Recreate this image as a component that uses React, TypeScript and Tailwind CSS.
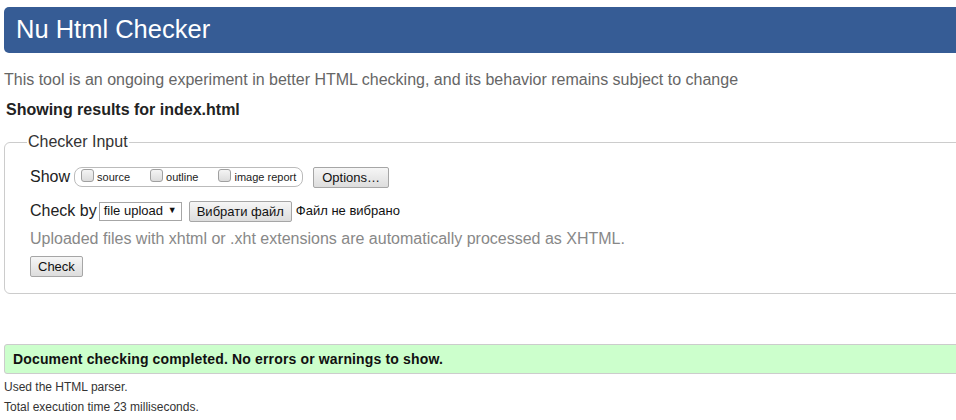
import React from 'react';

const Box: React.FC = () => (
  <span className="inline-block w-[13px] h-[13px] rounded-[3px] border border-[#a0a0a0] bg-gradient-to-b from-[#f4f4f4] to-[#dcdcdc] align-middle mr-[3px] relative top-[-2px]" />
);

export default function App() {
  return (
    <div className="w-[956px] h-[420px] overflow-hidden bg-white" style={{ fontFamily: '"Liberation Sans", Arial, sans-serif' }}>
      <div className="w-[990px] px-[4px] pt-[7px]">
        {/* Header */}
        <div className="h-[46px] bg-[#365c95] rounded-[5px] flex items-center pl-[12px]">
          <h1 className="text-white text-[25.5px] leading-none">Nu Html Checker</h1>
        </div>

        <p className="text-[#666] text-[16px] leading-[20px] mt-[17px]">
          This tool is an ongoing experiment in better HTML checking, and its behavior remains subject to change
        </p>
        <p className="font-bold text-[#222] text-[16px] leading-[18px] mt-[11px] pl-[2px]">Showing results for index.html</p>

        {/* Checker Input */}
        <fieldset className="mt-[14px] border border-[#ccc] rounded-[6px] pl-[25px] pr-4 pb-[15px] pt-[8px]">
          <legend className="text-[#333] text-[16px] leading-[18px] px-[1px] -ml-[3px]">Checker Input</legend>

          <div className="flex items-center h-[22px] mt-[7px]">
            <span className="text-[#222] text-[16px]">Show</span>
            <span className="ml-[4px] flex items-center h-[20px] border border-[#bbb] rounded-[8px] pl-[6px] pr-[6px] text-[11px] text-[#222]">
              <label className="flex items-center"><Box />source</label>
              <label className="flex items-center ml-[20px]"><Box />outline</label>
              <label className="flex items-center ml-[20px]"><Box />image report</label>
            </span>
            <button className="ml-[10px] h-[21px] px-[8px] border border-[#a6a6a6] rounded-[2px] bg-gradient-to-b from-[#f6f6f6] to-[#dddddd] text-[13px] text-[#111]">
              Options…
            </button>
          </div>

          <div className="flex items-center h-[22px] mt-[12px]">
            <span className="text-[#222] text-[16px]">Check by</span>
            <span className="ml-[2px] h-[19px] w-[83px] border border-[#a6a6a6] bg-white flex items-center justify-between px-[4px] text-[13px] text-[#111]">
              file upload<span className="text-[9px]">▼</span>
            </span>
            <button className="ml-[7px] h-[21px] px-[7px] border border-[#a6a6a6] rounded-[2px] bg-gradient-to-b from-[#f6f6f6] to-[#dddddd] text-[13px] text-[#111]">
              Вибрати файл
            </button>
            <span className="ml-[4px] text-[13px] text-[#111]">Файл не вибрано</span>
          </div>

          <p className="text-[#888] text-[16px] leading-[20px] mt-[7px]">
            Uploaded files with xhtml or .xht extensions are automatically processed as XHTML.
          </p>

          <button className="mt-[7px] h-[21px] px-[7px] border border-[#a6a6a6] rounded-[2px] bg-gradient-to-b from-[#f6f6f6] to-[#dddddd] text-[13px] text-[#111]">
            Check
          </button>
        </fieldset>

        {/* Result */}
        <div className="mt-[50px] h-[30px] bg-[#ccffcc] border border-[#ccc] rounded-[3px] flex items-center pl-[8px]">
          <span className="font-bold text-[14px] text-[#111] tracking-[0.15px]">Document checking completed. No errors or warnings to show.</span>
        </div>
        <p className="text-[12px] text-[#333] leading-[14px] mt-[6px]">Used the HTML parser.</p>
        <p className="text-[12px] text-[#333] leading-[14px] mt-[6px]">Total execution time 23 milliseconds.</p>
      </div>
    </div>
  );
}
